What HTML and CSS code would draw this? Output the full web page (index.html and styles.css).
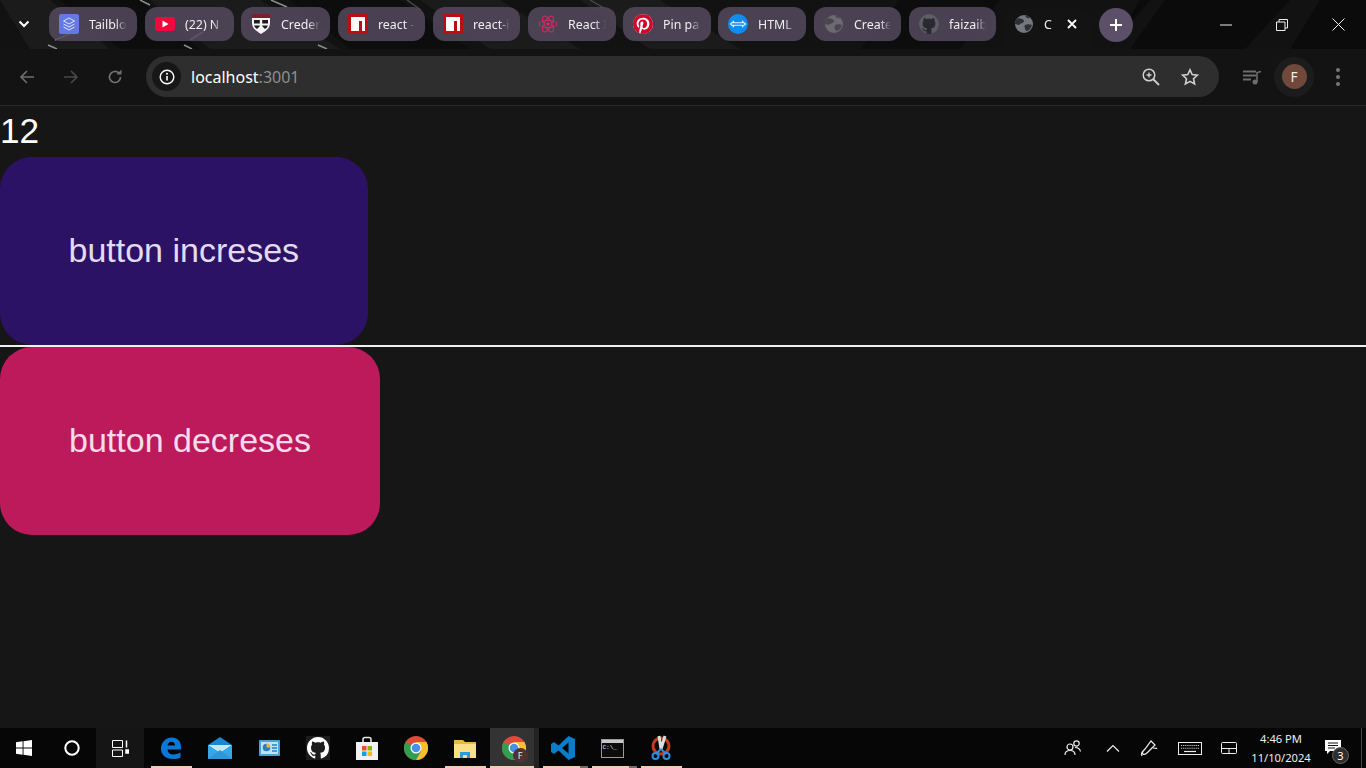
FILE: index.html
```html
<!DOCTYPE html>
<html lang="en">
<head>
<meta charset="utf-8">
<title>Create React App</title>
<link rel="stylesheet" href="styles.css">
</head>
<body>
<div class="app">
  <header class="tabstrip">
    <svg class="wallpaper" viewBox="0 0 1366 49" preserveAspectRatio="none" aria-hidden="true">
      <rect width="1366" height="49" fill="#121212"/>
      <g fill="#1b1b1b">
        <polygon points="0,0 50,0 110,49 30,49"/><polygon points="150,0 260,0 340,49 210,49"/>
        <polygon points="420,0 500,0 580,49 490,49"/><polygon points="580,0 660,0 740,49 650,49"/>
      </g>
      <g fill="#0d0d0d">
        <polygon points="60,0 140,0 200,49 120,49"/><polygon points="290,0 400,0 470,49 350,49"/>
        <polygon points="900,0 1000,0 960,49 860,49"/>
      </g>
      <g fill="#0b0b0b">
        <polygon points="1140,0 1366,0 1366,49 1110,49"/>
      </g>
      <g fill="#121212">
        <polygon points="1150,0 1165,0 1130,49 1110,49"/><polygon points="1290,0 1320,0 1290,49 1245,49"/>
      </g>
      <g stroke="#8f8f8f" stroke-width="1.400" fill="none">
        <path d="M140 0l10 5M48 45l9 4M184 45l8 4M271 0l16 7M318 45l9 4"/>
      </g>
      <g stroke="#4a4a4a" stroke-width="1.400" fill="none">
        <path d="M407 0l14 10M590 0l14 8"/>
      </g>
      <g stroke="#9a90a6" stroke-width="1.500" fill="none">
        <path d="M55 40l17-7M190 40l13-8"/>
      </g>
    </svg>
    <button class="tabsearch" type="button" aria-label="Search tabs">
      <svg width="12" height="8" viewBox="0 0 12 8"><path d="M1.500 1.500L6 6l4.500-4.500" fill="none" stroke="#fff" stroke-width="2"/></svg>
    </button>
    <div class="tab">
      <svg class="fav" viewBox="0 0 20 20"><rect width="20" height="20" rx="2" fill="#6478e6"/><path d="M10 4l5.500 3L10 10 4.500 7zM4.500 10l5.500 3 5.500-3M4.500 13l5.500 3 5.500-3" fill="none" stroke="#dfe4ff" stroke-width="1"/></svg>
      <span class="tab-title">Tailblo</span>
    </div>
    <div class="tab">
      <svg class="fav" viewBox="0 0 20 20"><rect y="3" width="20" height="14" rx="3" fill="#f5063d"/><path d="M7.500 6.500l6 3.500-6 3.500z" fill="#fff"/></svg>
      <span class="tab-title">(22) N</span>
    </div>
    <div class="tab">
      <svg class="fav" viewBox="0 0 20 20"><path d="M1 0h18v9c0 5-4 8-9 11-5-3-9-6-9-11z" fill="#f4f4f4"/><path d="M1 0h18v4H1z" fill="#7d1f2c"/><path d="M3 6h14v4c0 2-1 4-3 5l-4-4-4 4c-2-1-3-3-3-5z" fill="#1d1d1d"/><path d="M8.800 6h2.400v3.500H17v2h-5.800V15H8.800v-3.500H3v-2h5.800z" fill="#f4f4f4"/></svg>
      <span class="tab-title">Creder</span>
    </div>
    <div class="tab">
      <svg class="fav" viewBox="0 0 20 20"><rect width="20" height="20" fill="#b90f14"/><path d="M3 3h14v14h-3V7h-3v10H3z" fill="#fff"/></svg>
      <span class="tab-title">react -</span>
    </div>
    <div class="tab">
      <svg class="fav" viewBox="0 0 20 20"><rect width="20" height="20" fill="#b90f14"/><path d="M3 3h14v14h-3V7h-3v10H3z" fill="#fff"/></svg>
      <span class="tab-title">react-i</span>
    </div>
    <div class="tab">
      <svg class="fav fav-lg" viewBox="0 0 20 20"><g fill="none" stroke="#d42a62" stroke-width="1"><ellipse cx="10" cy="10" rx="9" ry="3.600"/><ellipse cx="10" cy="10" rx="9" ry="3.600" transform="rotate(60 10 10)"/><ellipse cx="10" cy="10" rx="9" ry="3.600" transform="rotate(120 10 10)"/></g><circle cx="10" cy="10" r="1.800" fill="#d42a62"/></svg>
      <span class="tab-title">React I</span>
    </div>
    <div class="tab">
      <svg class="fav" viewBox="0 0 24 24"><circle cx="12" cy="12" r="12" fill="#fff"/><path fill="#d2052b" d="M12.017 0C5.396 0 .029 5.367.029 11.987c0 5.079 3.158 9.417 7.618 11.162-.105-.949-.199-2.403.041-3.439.219-.937 1.406-5.957 1.406-5.957s-.359-.72-.359-1.781c0-1.663.967-2.911 2.168-2.911 1.024 0 1.518.769 1.518 1.688 0 1.029-.653 2.567-.992 3.992-.285 1.193.6 2.165 1.775 2.165 2.128 0 3.768-2.245 3.768-5.487 0-2.861-2.063-4.869-5.008-4.869-3.41 0-5.409 2.562-5.409 5.199 0 1.033.394 2.143.889 2.741.099.12.112.225.085.345-.09.375-.293 1.199-.334 1.363-.053.225-.172.271-.401.165-1.495-.69-2.433-2.878-2.433-4.646 0-3.776 2.748-7.252 7.92-7.252 4.158 0 7.392 2.967 7.392 6.923 0 4.135-2.607 7.462-6.233 7.462-1.214 0-2.354-.629-2.758-1.379l-.749 2.848c-.269 1.045-1.004 2.352-1.498 3.146 1.123.345 2.306.535 3.55.535 6.607 0 11.985-5.365 11.985-11.987C23.970 5.390 18.592.026 11.985.026L12.017 0z"/></svg>
      <span class="tab-title">Pin pa</span>
    </div>
    <div class="tab">
      <svg class="fav" viewBox="0 0 20 20"><circle cx="10" cy="10" r="10" fill="#0f8df2"/><path d="M2.500 10L5.500 7.500v1.300h9V7.500l3 2.500-3 2.500v-1.300h-9v1.300z" fill="#0f8df2" stroke="#e8f4ff" stroke-width="1.100"/></svg>
      <span class="tab-title">HTML</span>
    </div>
    <div class="tab">
      <svg class="fav" viewBox="0 0 20 20"><circle cx="10" cy="10" r="9" fill="#6a6a70"/><path d="M4 4c2 1 5 0 6 3 0 2-3 2-4 3-1 2-3 0-5 0 0-2 1-4 3-6zM11 11c2-1 5-1 7 0-1 3-3 6-6 6-1-2-2-4-1-6zM11 1.500c2 0 4 1 5 2.500-2 .5-4 0-5-2.500z" fill="#4a4650"/></svg>
      <span class="tab-title">Create</span>
    </div>
    <div class="tab">
      <svg class="fav" viewBox="0 0 16 16"><circle cx="8" cy="8" r="8" fill="#2a2830"/><path fill="#5d5d66" d="M8 0C3.580 0 0 3.580 0 8c0 3.540 2.290 6.530 5.470 7.590.4.070.55-.17.55-.38 0-.19-.01-.82-.01-1.490-2.010.37-2.530-.49-2.690-.94-.09-.23-.48-.94-.82-1.130-.28-.15-.68-.52-.01-.53.63-.01 1.080.58 1.230.82.72 1.210 1.870.87 2.330.66.07-.52.28-.87.51-1.070-1.780-.2-3.640-.89-3.640-3.950 0-.87.31-1.590.82-2.150-.08-.2-.36-1.020.08-2.120 0 0 .67-.21 2.200.82.64-.18 1.320-.27 2-.27.68 0 1.360.09 2 .27 1.530-1.040 2.200-.82 2.200-.82.44 1.100.16 1.920.08 2.120.51.56.82 1.270.82 2.150 0 3.070-1.870 3.750-3.650 3.950.29.25.54.73.54 1.480 0 1.070-.01 1.930-.01 2.200 0 .21.15.46.55.38A8.013 8.013 0 0016 8c0-4.420-3.580-8-8-8z"/></svg>
      <span class="tab-title">faizaib</span>
    </div>
    <div class="tab tab-active">
      <svg class="fav" viewBox="0 0 20 20"><circle cx="10" cy="10" r="9" fill="#73787d"/><path d="M4 4c2 1 5 0 6 3 0 2-3 2-4 3-1 2-3 0-5 0 0-2 1-4 3-6zM11 11c2-1 5-1 7 0-1 3-3 6-6 6-1-2-2-4-1-6zM11 1.500c2 0 4 1 5 2.500-2 .5-4 0-5-2.500z" fill="#2c2f33"/></svg>
      <span class="tab-title tab-title-short">C</span>
      <svg class="tab-close" width="10" height="10" viewBox="0 0 10 10"><path d="M1 1l8 8M9 1l-8 8" stroke="#fff" stroke-width="1.800"/></svg>
    </div>
    <button class="newtab" type="button" aria-label="New tab">
      <svg width="14" height="14" viewBox="0 0 14 14"><path d="M7 1v12M1 7h12" stroke="#fff" stroke-width="2"/></svg>
    </button>
    <div class="winctl">
      <span class="winbtn"><svg width="12" height="12" viewBox="0 0 12 12"><path d="M0 6h12" stroke="#eee" stroke-width="1"/></svg></span>
      <span class="winbtn"><svg width="12" height="12" viewBox="0 0 12 12"><path d="M.5 3h8.500v8.500H.5zM3 3V.5h8.500V9H9" fill="none" stroke="#eee" stroke-width="1"/></svg></span>
      <span class="winbtn"><svg width="13" height="13" viewBox="0 0 13 13"><path d="M.5.500l12 12M12.500.500l-12 12" stroke="#eee" stroke-width="1"/></svg></span>
    </div>
  </header>

  <nav class="toolbar">
    <span class="navbtn"><svg width="16" height="16" viewBox="0 0 16 16"><path d="M15 8H2M8 2L2 8l6 6" fill="none" stroke="#6f6f6f" stroke-width="1.600"/></svg></span>
    <span class="navbtn"><svg width="16" height="16" viewBox="0 0 16 16"><path d="M1 8h13M8 2l6 6-6 6" fill="none" stroke="#4a4a4a" stroke-width="1.600"/></svg></span>
    <span class="navbtn"><svg width="16" height="16" viewBox="0 0 16 16"><path d="M13.500 8a5.500 5.500 0 1 1-1.600-3.900" fill="none" stroke="#717171" stroke-width="1.700"/><path d="M9.500 5.500h5v-5z" fill="#717171"/></svg></span>
    <div class="omnibox">
      <span class="siteinfo"><svg width="16" height="16" viewBox="0 0 16 16"><circle cx="8" cy="8" r="6.800" fill="none" stroke="#fff" stroke-width="1.400"/><path d="M8 7v4.500" stroke="#fff" stroke-width="1.600"/><circle cx="8" cy="4.800" r="1" fill="#fff"/></svg></span>
      <span class="url">localhost<span class="url-port">:3001</span></span>
      <span class="omni-icon"><svg width="18" height="18" viewBox="0 0 18 18"><circle cx="7" cy="7" r="5.800" fill="none" stroke="#d0d0d0" stroke-width="1.500"/><path d="M11 11l6 6" stroke="#d0d0d0" stroke-width="1.800"/><path d="M7 4.500v5M4.500 7h5" stroke="#d0d0d0" stroke-width="1.300"/></svg></span>
      <span class="omni-icon"><svg width="18" height="18" viewBox="0 0 18 18"><path d="M9 1.800l2.200 4.800 5.200.6-3.900 3.500 1.100 5.200L9 13.300l-4.600 2.600 1.100-5.200L1.600 7.200l5.200-.6z" fill="none" stroke="#d0d0d0" stroke-width="1.600"/></svg></span>
    </div>
    <span class="tool-media"><svg width="20" height="16" viewBox="0 0 20 16"><path d="M1 2.500h13M1 6.500h13M1 10.500h8" stroke="#6d6d6d" stroke-width="1.800"/><circle cx="13" cy="13" r="2.500" fill="#6d6d6d"/><path d="M15 13V3.500L19 2.500" fill="none" stroke="#6d6d6d" stroke-width="1.600"/></svg></span>
    <span class="avatar-ring"><span class="avatar">F</span></span>
    <span class="kebab"><i></i><i></i><i></i></span>
  </nav>

  <main class="page">
    <div class="count">12</div>
    <button class="action action-inc" type="button">button increses</button>
    <hr class="rule">
    <button class="action action-dec" type="button">button decreses</button>
  </main>

  <footer class="taskbar">
    <span class="cell"><svg width="16" height="16" viewBox="0 0 16 16"><path d="M0 2.300l6.600-1v6.300H0zM7.500 1.200L16 0v7.600H7.500zM0 8.400h6.600v6.300l-6.600-1zM7.500 8.400H16V16l-8.500-1.200z" fill="#fff"/></svg></span>
    <span class="cell"><svg width="16" height="16" viewBox="0 0 16 16"><circle cx="8" cy="8" r="6.700" fill="none" stroke="#fff" stroke-width="2"/></svg></span>
    <span class="cell cell-hover"><svg width="17" height="17" viewBox="0 0 17 17"><path d="M.5.500h10v7H.5zM.5 10h10v6.500H.5z" fill="none" stroke="#fff" stroke-width="1"/><path d="M14.500.500v7M14 10h3v3h-3z" stroke="#fff" stroke-width="1.500" fill="#fff"/></svg></span>
    <span class="cell cell-app cell-first cell-open"><svg width="22" height="24" viewBox="0 0 22 24"><path d="M1 13C1 6 6 1.500 12 1.500c5 0 9 3.500 9 9.500v2.500H7.500c.3 3 2.500 5 6 5 2.500 0 5-.8 7-2v5c-2 1-4.500 1.500-7.500 1.500C6 23 1 19 1 13zM7.500 9.500h7.500c0-2.500-1.500-3.800-3.500-3.800S8 7.200 7.500 9.500z" fill="#0a78d7"/></svg></span>
    <span class="cell cell-app"><svg width="24" height="22" viewBox="0 0 24 22"><path d="M0 8L12 0l12 8v14H0z" fill="#1b86d2"/><path d="M0 8l12 8 12-8" fill="#bfe8fb"/><path d="M0 8l12 8 12-8v14H0z" fill="#36a8e8"/><path d="M0 22l12-9 12 9z" fill="#2b98dc"/></svg></span>
    <span class="cell cell-app"><svg width="21" height="16" viewBox="0 0 21 16"><rect width="21" height="16" rx="1" fill="#4aa3d8"/><rect x="2" y="2" width="17" height="12" fill="#bfe3f7"/><circle cx="7.500" cy="7.500" r="3.800" fill="#2b7fc0"/><path d="M7.500 7.500V3.700a3.800 3.800 0 0 1 3.800 3.800z" fill="#f2b83b"/><path d="M13 5h5M13 8h5M13 11h5" stroke="#2b7fc0" stroke-width="1.400"/></svg></span>
    <span class="cell cell-app"><span class="gh-tile"><svg width="22" height="22" viewBox="0 0 16 16"><path fill="#fff" d="M8 0C3.580 0 0 3.580 0 8c0 3.540 2.290 6.530 5.470 7.590.4.070.55-.17.55-.38 0-.19-.01-.82-.01-1.490-2.010.37-2.530-.49-2.690-.94-.09-.23-.48-.94-.82-1.130-.28-.15-.68-.52-.01-.53.63-.01 1.080.58 1.230.82.72 1.210 1.870.87 2.330.66.07-.52.28-.87.51-1.070-1.780-.2-3.640-.89-3.640-3.950 0-.87.31-1.590.82-2.150-.08-.2-.36-1.020.08-2.120 0 0 .67-.21 2.200.82.64-.18 1.320-.27 2-.27.68 0 1.360.09 2 .27 1.530-1.040 2.200-.82 2.200-.82.44 1.100.16 1.920.08 2.120.51.56.82 1.270.82 2.150 0 3.070-1.870 3.750-3.650 3.950.29.25.54.73.54 1.480 0 1.070-.01 1.930-.01 2.200 0 .21.15.46.55.38A8.013 8.013 0 0016 8c0-4.420-3.580-8-8-8z"/></svg></span></span>
    <span class="cell cell-app"><svg width="24" height="24" viewBox="0 0 24 24"><path d="M8 6V3.500A2 2 0 0 1 10 1.500h4a2 2 0 0 1 2 2V6" fill="none" stroke="#e8e8e8" stroke-width="1.500"/><path d="M1 6h22v18H1z" fill="#f2f2f2"/><rect x="7" y="10" width="4.500" height="4.500" fill="#f25022"/><rect x="12.500" y="10" width="4.500" height="4.500" fill="#7fba00"/><rect x="7" y="15.500" width="4.500" height="4.500" fill="#00a4ef"/><rect x="12.500" y="15.500" width="4.500" height="4.500" fill="#ffb900"/></svg></span>
    <span class="cell cell-app"><svg width="24" height="24" viewBox="0 0 24 24"><use href="#chrome"/></svg></span>
    <span class="cell cell-app cell-open"><svg width="22" height="20" viewBox="0 0 22 20"><path d="M0 2h9l2 2h11v16H0z" fill="#e8b93f"/><path d="M0 6h22v14H0z" fill="#fbe08a"/><path d="M6 20v-6h10v6h-3v-3H9v3z" fill="#2e9ad8"/></svg></span>
    <span class="cell cell-app cell-active"><svg width="24" height="24" viewBox="0 0 24 24"><use href="#chrome"/></svg><span class="chrome-badge">F</span></span>
    <span class="cell cell-app cell-open cell-split"><svg width="24" height="24" viewBox="0 0 24 24"><path d="M17.500 0L24 3v18l-6.500 3-10-9.500L3 18l-3-2v-8l3-2 4.500 3.500zM17.500 6.500L11 12l6.500 5.500z" fill="#0a7cc9"/></svg></span>
    <span class="cell cell-app cell-open cell-split"><span class="cmd-tile"><span class="cmd-bar"></span><span class="cmd-text">C:\_</span></span></span>
    <span class="cell cell-app cell-open"><svg width="20" height="26" viewBox="0 0 20 26"><circle cx="10" cy="11" r="8" fill="none" stroke="#c83a1a" stroke-width="3"/><path d="M8 1l2 13M14 1l-4 13" stroke="#dcdcdc" stroke-width="3"/><path d="M10 14l-5 5M10 14l5 5" stroke="#2b8fe0" stroke-width="2"/><circle cx="4.500" cy="21" r="3" fill="none" stroke="#2b8fe0" stroke-width="2"/><circle cx="15.500" cy="21" r="3" fill="none" stroke="#2b8fe0" stroke-width="2"/></svg></span>

    <div class="tray">
      <span class="tray-item"><svg width="18" height="16" viewBox="0 0 18 16"><circle cx="6" cy="7" r="3" fill="none" stroke="#eee" stroke-width="1.200"/><path d="M1 15c0-3 2-4.500 5-4.500s5 1.500 5 4.500" fill="none" stroke="#eee" stroke-width="1.200"/><circle cx="12.500" cy="3.500" r="2.700" fill="none" stroke="#eee" stroke-width="1.200"/><path d="M11 7.500c3 0 5 1.500 5.500 4" fill="none" stroke="#eee" stroke-width="1.200"/></svg></span>
      <span class="tray-item"><svg width="14" height="8" viewBox="0 0 14 8"><path d="M1 7.500L7 1.500l6 6" fill="none" stroke="#eee" stroke-width="1.200"/></svg></span>
      <span class="tray-item tray-pen"><svg width="18" height="18" viewBox="0 0 18 18"><path d="M11 2l4 4-7 7c-2 2-4 3-5 2s0-3 2-5z M2 17c-1-2 0-4 1-5" fill="none" stroke="#eee" stroke-width="1.200"/><path d="M13 9c2 0 3 1 4 0" fill="none" stroke="#eee" stroke-width="1.200"/></svg></span>
      <span class="tray-item tray-kbd"><svg width="24" height="13" viewBox="0 0 24 13"><rect x=".5" y=".5" width="23" height="12" fill="none" stroke="#eee" stroke-width="1"/><path d="M3 3.500h18M3 6.200h18" stroke="#ccc" stroke-width="1.100" stroke-dasharray="1.200 .9"/><path d="M6 9.500h12" stroke="#eee" stroke-width="1.200"/></svg></span>
      <span class="tray-item tray-pad"><svg width="16" height="12" viewBox="0 0 16 12"><rect x=".5" y=".5" width="15" height="11" rx="1" fill="none" stroke="#eee" stroke-width="1"/><path d="M0 6.500h16M8 6.500V12" stroke="#eee" stroke-width="1"/></svg></span>
      <span class="clock"><span>4:46 PM</span><span>11/10/2024</span></span>
      <span class="notif">
        <svg width="16" height="14" viewBox="0 0 16 14"><path d="M0 0h16v11H5l-3 3v-3H0z" fill="#fff"/><path d="M3 3h10M3 5.500h10M3 8h7" stroke="#111" stroke-width="1"/></svg>
        <span class="notif-badge">3</span>
      </span>
      <span class="showdesk"></span>
    </div>
  </footer>
</div>
<svg class="defs" width="0" height="0" aria-hidden="true">
  <defs>
    <g id="chrome">
      <circle cx="12" cy="12" r="12" fill="#dd4b3e"/>
      <path d="M12 12L1.600 6A12 12 0 0 0 12 24l5.200-9z" fill="#2f9e4f"/>
      <path d="M12 6h10.400A12 12 0 0 1 12 24l5.200-9z" fill="#f6c02c"/>
      <circle cx="12" cy="12" r="5.500" fill="#fff"/>
      <circle cx="12" cy="12" r="4.300" fill="#4a8fe8"/>
    </g>
  </defs>
</svg>
</body>
</html>
```
FILE: styles.css
```css
* { box-sizing: border-box; }
html, body { margin: 0; padding: 0; background: #161616; }
body { font-family: "Liberation Sans", Arial, sans-serif; overflow: hidden; }
.app { width: 1366px; height: 768px; display: flex; flex-direction: column; overflow: hidden; }
.defs { position: absolute; }

/* tab strip */
.tabstrip { position: relative; height: 49px; flex: none; display: flex; align-items: flex-start; padding-top: 7px; font-family: "Noto Sans", sans-serif; font-size: 12.400px; color: #eee; }
.wallpaper { position: absolute; inset: 0; width: 100%; height: 100%; }
.tabsearch { position: relative; width: 49px; height: 34px; flex: none; background: none; border: 0; padding: 0 2px 0 0; display: flex; align-items: center; justify-content: center; }
.tab { position: relative; flex: none; width: 88px; height: 34px; margin-right: 8px; border-radius: 12px; background: rgba(84, 74, 94, 0.86); display: flex; align-items: center; padding: 0 10px; gap: 10px; }
.tab:nth-of-type(2), .tab:nth-of-type(3) { width: 89px; }
.tab:nth-of-type(4), .tab:nth-of-type(5), .tab:nth-of-type(9), .tab:nth-of-type(10) { width: 87px; }
.tab:nth-of-type(2), .tab:nth-of-type(6), .tab:nth-of-type(7) { margin-right: 7px; }
.fav { width: 20px; height: 20px; flex: none; }
.fav-lg { width: 20px; height: 22px; }
.tab-title { flex: 1; min-width: 0; white-space: nowrap; -webkit-mask-image: linear-gradient(90deg, #000 70%, transparent 100%); mask-image: linear-gradient(90deg, #000 70%, transparent 100%); }
.tab-active { background: #131313; width: 86px; margin-right: 9px; border-radius: 12px 12px 0 0; height: 42px; padding-bottom: 8px; }
.tab-title-short { flex: none; width: 12px; }
.tab-close { margin-left: 1px; flex: none; }
.newtab { position: relative; width: 34px; height: 34px; flex: none; border: 0; border-radius: 50%; background: #5c5068; padding: 0; display: flex; align-items: center; justify-content: center; margin-top: 1px; }
.winctl { position: relative; margin-left: auto; display: flex; margin-top: -7px; height: 49px; }
.winbtn { width: 56px; height: 49px; display: flex; align-items: center; justify-content: center; }

/* toolbar */
.toolbar { height: 57px; flex: none; background: #131313; border-bottom: 1px solid #2a2a2a; display: flex; align-items: center; padding: 0 0 1px 5px; position: relative; }
.navbtn { width: 44px; height: 34px; flex: none; display: flex; align-items: center; justify-content: center; }
.omnibox { width: 1073px; height: 41px; margin-left: 9px; border-radius: 21px; background: #2e2e2e; display: flex; align-items: center; padding: 0 10px 0 6px; font-family: "Noto Sans", sans-serif; font-size: 16px; }
.siteinfo { width: 29px; height: 29px; flex: none; border-radius: 50%; background: #171717; display: flex; align-items: center; justify-content: center; }
.url { margin-left: 10px; color: #fff; flex: 1; }
.url-port { color: #8f8f8f; }
.omni-icon { width: 39px; height: 30px; flex: none; display: flex; align-items: center; justify-content: center; }
.tool-media { width: 20px; margin-left: 23px; flex: none; display: flex; }
.avatar-ring { width: 40px; height: 40px; margin-left: 12px; flex: none; border-radius: 50%; background: #1c1c1c; display: flex; align-items: center; justify-content: center; }
.avatar { width: 25px; height: 25px; border-radius: 50%; background: #70483c; color: #eee; font: 13.500px "Noto Sans", sans-serif; display: flex; align-items: center; justify-content: center; }
.kebab { margin-left: 22px; display: flex; flex-direction: column; gap: 3px; flex: none; }
.kebab i { display: block; width: 4px; height: 4px; border-radius: 50%; background: #777; }

/* page */
.page { flex: 1; min-height: 0; background: #161616; }
.count { font-size: 35.200px; line-height: 40px; color: #fff; padding: 5px 0 6px; }
.action { display: block; height: 188px; border: 0; padding: 0 68.500px 1px; border-radius: 32px; font: 34px "Liberation Sans", Arial, sans-serif; }
.action-inc { background: #2c1265; color: #e2dcf2; }
.action-dec { background: #bc1a5b; color: #f6dcea; width: 380px; }
.rule { margin: 0; height: 2px; border: 0; background: #f0f0f0; }

/* taskbar */
.taskbar { height: 40px; flex: none; background: #060606; display: flex; font-family: "Noto Sans", sans-serif; font-size: 11.200px; color: #eee; }
.cell { position: relative; width: 48px; height: 40px; flex: none; display: flex; align-items: center; justify-content: center; }
.cell-app { width: 49px; }
.cell-first { margin-left: 2.500px; }
.cell-hover { background: #151515; }
.cell-open::after { content: ""; position: absolute; left: 4px; right: 4px; bottom: 0; height: 2px; background: #f6c9b3; }
.cell-active { background: linear-gradient(90deg, #333 44px, #232323 44px); }
.cell-active::after { content: ""; position: absolute; left: 0; right: 5px; bottom: 0; height: 2px; background: #f6c9b3; }
.cell-split::before { content: ""; position: absolute; right: 0; bottom: 0; width: 8px; height: 2px; background: #7a6a62; z-index: 1; }
.gh-tile { width: 24px; height: 24px; background: #1c1c1c; display: flex; align-items: center; justify-content: center; }
.chrome-badge { position: absolute; left: 23px; top: 20px; width: 15px; height: 15px; border-radius: 50%; background: #4e342e; color: #eee; font-size: 9px; line-height: 15px; text-align: center; }
.cmd-tile { width: 23px; height: 19px; background: #0c0c0c; border: 1px solid #9a9a9a; display: flex; flex-direction: column; }
.cmd-bar { height: 3px; background: #c8c8c8; flex: none; }
.cmd-text { font: 6px/9px "Liberation Mono", monospace; color: #eee; padding-left: 1px; }
.tray { margin-left: auto; display: flex; align-items: center; height: 40px; }
.tray-item { width: 40px; height: 40px; display: flex; align-items: center; justify-content: center; flex: none; }
.tray-pen { width: 32px; }
.tray-kbd { width: 50px; }
.tray-pad { width: 28px; }
.clock { width: 76px; display: flex; flex-direction: column; align-items: center; line-height: 19px; white-space: nowrap; flex: none; }
.notif { position: relative; width: 28px; height: 40px; flex: none; display: flex; align-items: center; justify-content: center; padding-bottom: 3px; }
.notif-badge { position: absolute; left: 13px; top: 19px; width: 17px; height: 17px; border-radius: 50%; background: #2e2e2e; border: 1px solid #666; color: #fff; font-size: 11px; line-height: 15px; text-align: center; }
.showdesk { width: 5px; height: 40px; border-left: 1px solid #444; margin-left: 14px; flex: none; }
```
